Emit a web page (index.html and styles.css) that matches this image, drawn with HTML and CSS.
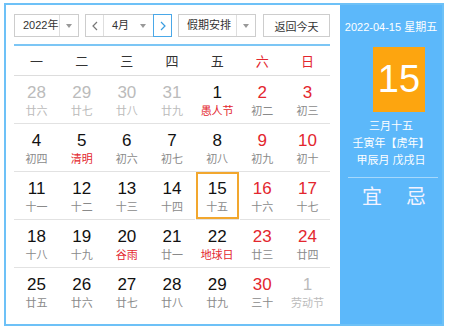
FILE: index.html
```html
<!DOCTYPE html>
<html>
<head>
  <meta charset="UTF-8">
  <title>万年历</title>
  <link rel="stylesheet" href="styles.css">
</head>
<body>
  <div class="calendar">
    <div class="main">
      <div class="toolbar">
        <div class="select year">
          <span class="select-label">2022年</span>
          <span class="select-arrow"></span>
        </div>
        <div class="month-group">
          <button class="nav prev">
            <svg width="6" height="10" viewBox="0 0 6 10"><polyline points="5,1 1,5 5,9" fill="none" stroke="#777" stroke-width="1.2"/></svg>
          </button>
          <div class="month">
            <span class="select-label">4月</span>
            <span class="caret"></span>
          </div>
          <button class="nav next">
            <svg width="6" height="10" viewBox="0 0 6 10"><polyline points="1,1 5,5 1,9" fill="none" stroke="#3a9de0" stroke-width="1.2"/></svg>
          </button>
        </div>
        <div class="select holiday">
          <span class="select-label">假期安排</span>
          <span class="select-arrow"></span>
        </div>
        <button class="today-btn">返回今天</button>
      </div>

      <div class="weekdays">
        <span>一</span><span>二</span><span>三</span><span>四</span><span>五</span>
        <span class="weekend">六</span><span class="weekend">日</span>
      </div>

      <div class="days">
        <div class="day other"><b>28</b><i>廿六</i></div>
        <div class="day other"><b>29</b><i>廿七</i></div>
        <div class="day other"><b>30</b><i>廿八</i></div>
        <div class="day other"><b>31</b><i>廿九</i></div>
        <div class="day"><b>1</b><i class="festival">愚人节</i></div>
        <div class="day weekend"><b>2</b><i>初二</i></div>
        <div class="day weekend"><b>3</b><i>初三</i></div>

        <div class="day"><b>4</b><i>初四</i></div>
        <div class="day"><b>5</b><i class="festival">清明</i></div>
        <div class="day"><b>6</b><i>初六</i></div>
        <div class="day"><b>7</b><i>初七</i></div>
        <div class="day"><b>8</b><i>初八</i></div>
        <div class="day weekend"><b>9</b><i>初九</i></div>
        <div class="day weekend"><b>10</b><i>初十</i></div>

        <div class="day"><b>11</b><i>十一</i></div>
        <div class="day"><b>12</b><i>十二</i></div>
        <div class="day"><b>13</b><i>十三</i></div>
        <div class="day"><b>14</b><i>十四</i></div>
        <div class="day today"><b>15</b><i>十五</i></div>
        <div class="day weekend"><b>16</b><i>十六</i></div>
        <div class="day weekend"><b>17</b><i>十七</i></div>

        <div class="day"><b>18</b><i>十八</i></div>
        <div class="day"><b>19</b><i>十九</i></div>
        <div class="day"><b>20</b><i class="festival">谷雨</i></div>
        <div class="day"><b>21</b><i>廿一</i></div>
        <div class="day"><b>22</b><i class="festival">地球日</i></div>
        <div class="day weekend"><b>23</b><i>廿三</i></div>
        <div class="day weekend"><b>24</b><i>廿四</i></div>

        <div class="day"><b>25</b><i>廿五</i></div>
        <div class="day"><b>26</b><i>廿六</i></div>
        <div class="day"><b>27</b><i>廿七</i></div>
        <div class="day"><b>28</b><i>廿八</i></div>
        <div class="day"><b>29</b><i>廿九</i></div>
        <div class="day weekend"><b>30</b><i>三十</i></div>
        <div class="day other"><b>1</b><i>劳动节</i></div>
      </div>
    </div>

    <div class="side">
      <div class="side-date">2022-04-15 星期五</div>
      <div class="side-day">15</div>
      <div class="side-lunar">
        <p>三月十五</p>
        <p>壬寅年【虎年】</p>
        <p>甲辰月 戊戌日</p>
      </div>
      <div class="side-rule"></div>
      <div class="side-yiji">
        <span>宜</span>
        <span>忌</span>
      </div>
    </div>
  </div>
</body>
</html>
```

FILE: styles.css
```css
body {
  margin: 0;
  background-color: #ffffff;
  font-family: "Liberation Sans", "Noto Sans CJK SC", sans-serif;
  color: #333;
}

.calendar {
  display: flex;
  width: 436px;
  height: 319px;
  margin: 3px 0 0 4px;
  border: 2px solid #6dc1f7;
  background-color: #ffffff;
}

.main {
  width: 316px;
  padding: 9px 10px 0 8px;
}

/* toolbar */

.toolbar {
  display: flex;
  height: 23px;
  margin-bottom: 7px;
  font-size: 11px;
  white-space: nowrap;
}

.select,
.month-group,
.today-btn {
  display: flex;
  box-sizing: border-box;
  height: 23px;
  border: 1px solid #cdcdcd;
  background-color: #ffffff;
}

.select-label {
  flex: 1;
  line-height: 21px;
  padding-left: 8px;
  color: #333;
}

.select-arrow {
  position: relative;
  width: 18px;
  border-left: 1px solid #dedede;
}

.select-arrow::after,
.caret::after {
  content: "";
  position: absolute;
  left: 6px;
  top: 9px;
  border-left: 3px solid transparent;
  border-right: 3px solid transparent;
  border-top: 4px solid #999;
}

.year {
  width: 65px;
}

.month-group {
  width: 87px;
  margin-left: 6px;
}

.nav {
  display: flex;
  align-items: center;
  justify-content: center;
  width: 18px;
  padding: 0;
  border: none;
  background: none;
}

.nav.prev {
  border-right: 1px solid #dedede;
}

.nav.next {
  width: 19px;
  height: 23px;
  margin: -1px -1px 0 0;
  box-sizing: border-box;
  border: 1px solid #4aa8e8;
}

.month {
  display: flex;
  flex: 1;
}

.caret {
  position: relative;
  width: 17px;
}

.caret::after {
  left: 4px;
}

.holiday {
  width: 78px;
  margin-left: 6px;
}

.today-btn {
  width: 67px;
  margin-left: 7px;
  justify-content: center;
  align-items: center;
  padding: 0;
  font-family: inherit;
  font-size: 11px;
  color: #333;
}

/* grid */

.weekdays {
  display: grid;
  grid-template-columns: repeat(7, 1fr);
  height: 26px;
  padding-top: 3px;
  border-top: 2px solid #7cc6f5;
  border-bottom: 1px solid #dddddd;
  font-size: 13px;
  line-height: 26px;
  text-align: center;
  color: #333;
}

.weekdays .weekend {
  color: #e3262e;
}

.days {
  display: grid;
  grid-template-columns: repeat(7, 1fr);
}

.day {
  display: flex;
  flex-direction: column;
  align-items: center;
  height: 40px;
  padding-top: 7px;
  border-bottom: 1px solid #e2e2e2;
}

.day:nth-last-child(-n+7) {
  border-bottom: none;
}

.day b {
  font-size: 17px;
  font-weight: normal;
  line-height: 20px;
  color: #111;
}

.day i {
  font-style: normal;
  font-size: 11px;
  line-height: 16px;
  color: #8a8a8a;
  white-space: nowrap;
}

.day.weekend b {
  color: #e3262e;
}

.day i.festival {
  color: #e3262e;
}

.day.other b,
.day.other i {
  color: #bbbbbb;
}

.day.today {
  margin: 0 1px;
  box-shadow: inset 0 0 0 2px #f2a72e;
}

/* side panel */

.side {
  flex: 1;
  padding-top: 14px;
  background-color: #5cb8fa;
  color: #ffffff;
}

.side-date {
  font-size: 11px;
  line-height: 16px;
  text-align: center;
  white-space: nowrap;
}

.side-day {
  width: 52px;
  height: 65px;
  margin: 12px 0 0 33px;
  background-color: #fda50f;
  font-size: 38px;
  line-height: 65px;
  text-align: center;
}

.side-lunar {
  margin-top: 6px;
  font-size: 11px;
  text-align: center;
  white-space: nowrap;
}

.side-lunar p {
  margin: 0;
  line-height: 17px;
}

.side-rule {
  height: 1px;
  margin: 8px 4px 0 8px;
  background-color: rgba(255, 255, 255, 0.45);
}

.side-yiji {
  display: flex;
  justify-content: center;
  gap: 24px;
  margin-top: 7px;
  padding-left: 6px;
  font-size: 20px;
  line-height: 24px;
  color: #f3f3ff;
}
```
